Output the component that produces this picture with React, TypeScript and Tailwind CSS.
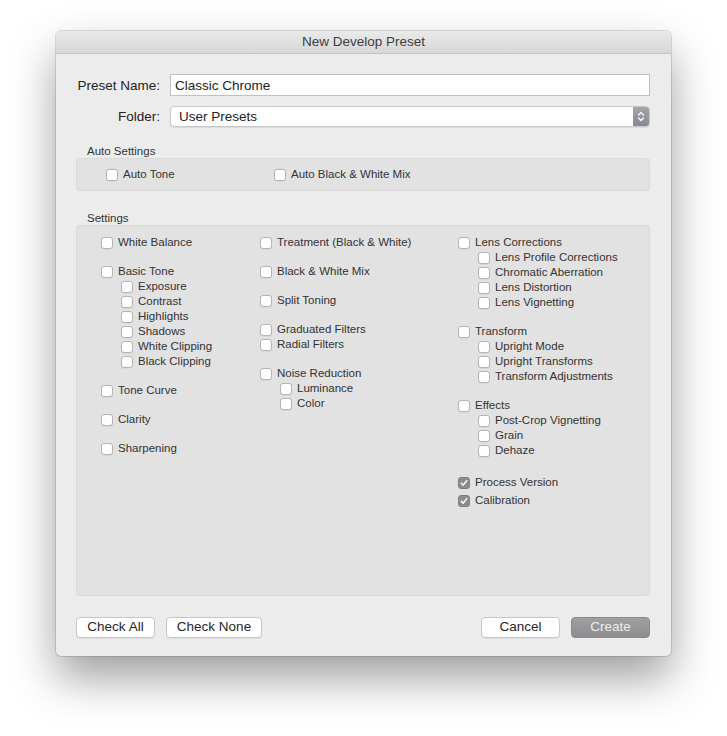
import React from "react";

type Item = { label: string; children?: string[]; checked?: boolean; tight?: boolean };

const col1: Item[] = [
  { label: "White Balance" },
  { label: "Basic Tone", children: ["Exposure", "Contrast", "Highlights", "Shadows", "White Clipping", "Black Clipping"] },
  { label: "Tone Curve" },
  { label: "Clarity" },
  { label: "Sharpening" },
];

const col2: Item[] = [
  { label: "Treatment (Black & White)" },
  { label: "Black & White Mix" },
  { label: "Split Toning" },
  { label: "Graduated Filters" },
  { label: "Radial Filters", tight: true },
  { label: "Noise Reduction", children: ["Luminance", "Color"] },
];

const col3: Item[] = [
  { label: "Lens Corrections", children: ["Lens Profile Corrections", "Chromatic Aberration", "Lens Distortion", "Lens Vignetting"] },
  { label: "Transform", children: ["Upright Mode", "Upright Transforms", "Transform Adjustments"] },
  { label: "Effects", children: ["Post-Crop Vignetting", "Grain", "Dehaze"] },
  { label: "Process Version", checked: true },
  { label: "Calibration", checked: true, tight: true },
];

const Box = ({ checked }: { checked?: boolean }) =>
  checked ? (
    <span className="w-[12px] h-[12px] rounded-[3px] bg-[#8c8c8c] border border-[#7f7f7f] flex items-center justify-center shrink-0">
      <svg width="8" height="8" viewBox="0 0 8 8">
        <path d="M1.3 4.2 L3.2 6.1 L6.8 1.6" fill="none" stroke="#fff" strokeWidth="1.5" strokeLinecap="round" strokeLinejoin="round" />
      </svg>
    </span>
  ) : (
    <span className="w-[12px] h-[12px] rounded-[3px] bg-white border border-[#b4b4b4] shadow-[0_0.5px_0.5px_rgba(0,0,0,0.08)] shrink-0" />
  );

const Row = ({ label, checked, tall }: { label: string; checked?: boolean; tall?: boolean }) => (
  <div className={`flex items-center gap-[5px] ${tall ? "h-[18px]" : "h-[15px]"}`}>
    <Box checked={checked} />
    <span className="text-[11.5px] text-[#333] whitespace-nowrap leading-none">{label}</span>
  </div>
);

const Column = ({ items, width }: { items: Item[]; width: string }) => (
  <div className={`flex flex-col ${width}`}>
    {items.map((it, i) => (
      <div key={it.label} className={i === 0 || it.tight ? "" : it.checked ? "mt-[16px]" : "mt-[14px]"}>
        <Row label={it.label} checked={it.checked} tall={it.checked} />
        {it.children && (
          <div className="pl-[20px] flex flex-col">
            {it.children.map((c) => (
              <Row key={c} label={c} />
            ))}
          </div>
        )}
      </div>
    ))}
  </div>
);

const Button = ({ label, w, primary }: { label: string; w: string; primary?: boolean }) => (
  <div
    className={`${w} h-[21px] rounded-[4px] flex items-center justify-center text-[13.5px] ${
      primary
        ? "bg-gradient-to-b from-[#a0a0a3] to-[#8d8d90] text-[#ececec] border border-[#8a8a8c]"
        : "bg-white text-[#262626] border border-[#c6c6c6] shadow-[0_1px_0_rgba(0,0,0,0.06)]"
    }`}
  >
    {label}
  </div>
);

export default function App() {
  return (
    <div className="w-[727px] h-[736px] bg-white overflow-hidden pt-[31px] pl-[56px]" style={{ fontFamily: '"Liberation Sans", Arial, sans-serif' }}>
      <div className="w-[615px] h-[625px] rounded-[5px] bg-[#ececec] flex flex-col shadow-[0_22px_45px_rgba(0,0,0,0.38),0_0_0_1px_rgba(0,0,0,0.12)] overflow-hidden">
        {/* title bar */}
        <div className="h-[23px] shrink-0 bg-gradient-to-b from-[#ebeaeb] to-[#d8d7d8] border-b border-[#c3c3c3] flex items-center justify-center text-[13.5px] text-[#3d3d3d]">
          New Develop Preset
        </div>

        <div className="flex flex-col pl-[20px] pr-[21px] pt-[20px]">
          {/* name */}
          <div className="flex items-center h-[22px]">
            <div className="w-[84px] text-right text-[13.5px] text-[#222] pt-[2px]">Preset Name:</div>
            <div className="ml-[10px] w-[480px] h-[22px] bg-white border border-[#c0c0c0] flex items-center pl-[4px] pt-[2px] text-[13.5px] text-[#222]">
              Classic Chrome
            </div>
          </div>
          {/* folder */}
          <div className="flex items-center h-[21px] mt-[10px]">
            <div className="w-[84px] text-right text-[13.5px] text-[#222] pt-[1px]">Folder:</div>
            <div className="ml-[10px] w-[480px] h-[21px] bg-white border border-[#c8c8c8] rounded-[4px] flex items-center shadow-[0_1px_1px_rgba(0,0,0,0.08)] overflow-hidden">
              <span className="flex-1 pl-[8px] pt-[1px] text-[13.5px] text-[#222]">User Presets</span>
              <span className="w-[16px] h-full bg-gradient-to-b from-[#a3a7ad] to-[#858a91] flex items-center justify-center">
                <svg width="8" height="13" viewBox="0 0 8 13">
                  <path d="M1.5 5 L4 2.5 L6.5 5 M1.5 8 L4 10.5 L6.5 8" fill="none" stroke="#fff" strokeWidth="1.2" strokeLinecap="round" strokeLinejoin="round" />
                </svg>
              </span>
            </div>
          </div>

          {/* auto settings */}
          <div className="mt-[19px] pl-[11px] h-[12px] flex items-center text-[11.5px] text-[#333]">Auto Settings</div>
          <div className="h-[33px] bg-[#e2e2e2] border border-[#dadada] rounded-[3px] flex items-center pl-[29px] pt-[1px]">
            <div className="w-[168px]">
              <Row label="Auto Tone" />
            </div>
            <Row label="Auto Black & White Mix" />
          </div>

          {/* settings */}
          <div className="mt-[21px] pl-[11px] h-[13px] flex items-center text-[11.5px] text-[#333]">Settings</div>
          <div className="h-[371px] bg-[#e2e2e2] border border-[#dadada] rounded-[3px] flex pl-[24px] pt-[9px]">
            <Column items={col1} width="w-[159px]" />
            <Column items={col2} width="w-[198px]" />
            <Column items={col3} width="flex-1" />
          </div>

          {/* buttons */}
          <div className="flex items-center mt-[21px]">
            <Button label="Check All" w="w-[79px]" />
            <div className="ml-[11px]">
              <Button label="Check None" w="w-[96px]" />
            </div>
            <div className="flex-1" />
            <Button label="Cancel" w="w-[79px]" />
            <div className="ml-[11px]">
              <Button label="Create" w="w-[79px]" primary />
            </div>
          </div>
        </div>
      </div>
    </div>
  );
}
